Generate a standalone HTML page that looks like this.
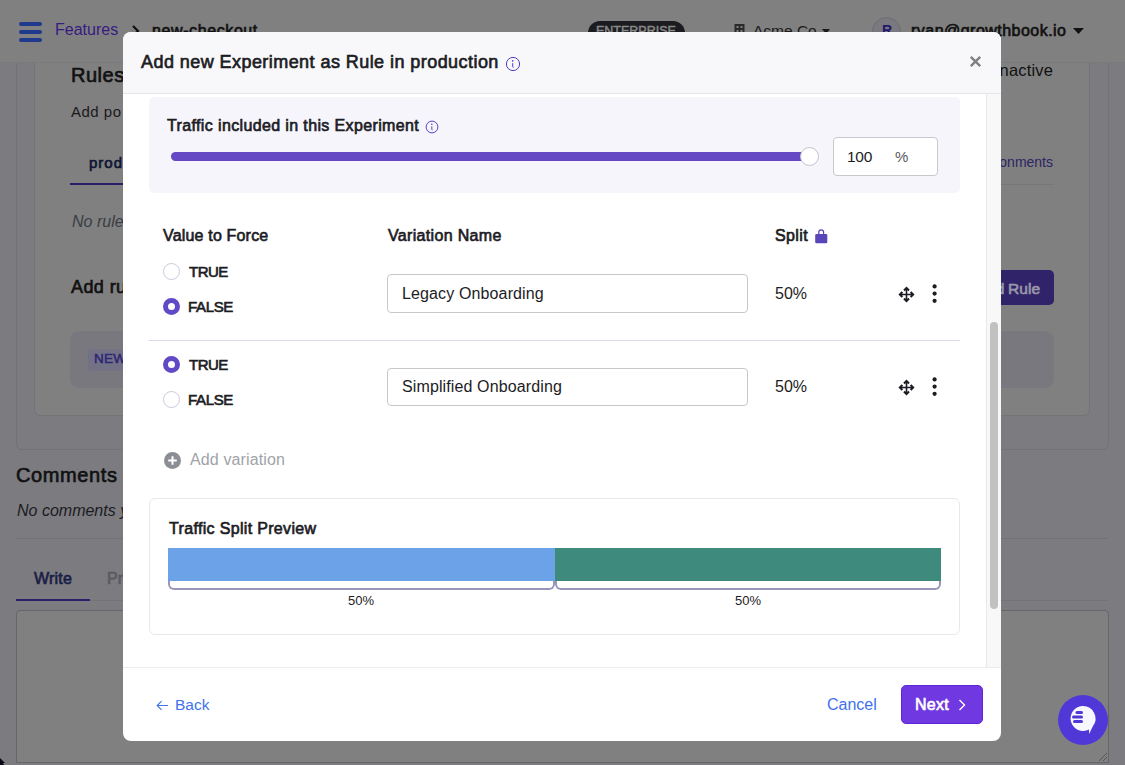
<!DOCTYPE html>
<html>
<head>
<meta charset="utf-8">
<style>
*{box-sizing:border-box;margin:0;padding:0}
html,body{width:1125px;height:765px;overflow:hidden}
body{background:#7b7b80;font-family:"Liberation Sans",sans-serif;position:relative;color:#1c1d22}
.a{position:absolute}
.t{position:absolute;white-space:nowrap;line-height:1}
.b{font-weight:700}
.sb{font-weight:400;-webkit-text-stroke-width:0.65px}
</style>
</head>
<body>
<!-- ============ BACKGROUND PAGE (pre-dimmed colours) ============ -->
<!-- outer card -->
<div class="a" style="left:16px;top:40px;width:1093px;height:410px;border:1px solid #727277;border-radius:6px;background:#7b7b80"></div>
<!-- inner card -->
<div class="a" style="left:34px;top:40px;width:1056px;height:376px;border:1px solid #747478;border-radius:6px;background:#808080"></div>
<div class="a" style="left:0;top:0;width:1125px;height:63px;background:#808080;border-bottom:1px solid #7a7a7c"></div>
<!-- hamburger -->
<div class="a" style="left:19px;top:22px;width:23px;height:4px;border-radius:2px;background:#1f3a8c"></div>
<div class="a" style="left:19px;top:30px;width:23px;height:4px;border-radius:2px;background:#1f3a8c"></div>
<div class="a" style="left:19px;top:38px;width:23px;height:4px;border-radius:2px;background:#1f3a8c"></div>
<div class="t" style="left:55px;top:22px;font-size:16px;color:#361b80">Features</div>
<svg class="a" style="left:131px;top:25px" width="10" height="12" viewBox="0 0 10 12"><path d="M2 1 L7 6 L2 11" stroke="#111" stroke-width="2.2" fill="none"/></svg>
<div class="t sb" style="left:152px;top:23px;font-size:16px;letter-spacing:0.6px;color:#111">new-checkout</div>
<div class="a" style="left:588px;top:21px;width:97px;height:24px;border-radius:12px;background:#1b1c20"></div>
<div class="t sb" style="left:596px;top:25px;font-size:12.5px;letter-spacing:0px;color:#888;-webkit-text-stroke-width:0.5px">ENTERPRISE</div>
<svg class="a" style="left:734px;top:24px" width="11" height="12" viewBox="0 0 11 12"><rect x="0.5" y="0" width="10" height="12" fill="#2a2a2c"/><rect x="2.5" y="2" width="2" height="2" fill="#808080"/><rect x="6.5" y="2" width="2" height="2" fill="#808080"/><rect x="2.5" y="6" width="2" height="2" fill="#808080"/><rect x="6.5" y="6" width="2" height="2" fill="#808080"/></svg>
<div class="t" style="left:753px;top:23px;font-size:15.5px;color:#1a1a1c">Acme Co</div>
<svg class="a" style="left:822px;top:29px" width="8" height="5" viewBox="0 0 8 5"><path d="M0 0 H8 L4 5Z" fill="#1a1a1c"/></svg>
<div class="a" style="left:872px;top:17px;width:29px;height:29px;border-radius:50%;background:#7a7980;border:1px solid #6c6c72"></div>
<div class="t b" style="left:882px;top:23px;font-size:14px;color:#22186a">R</div>
<div class="t sb" style="left:911px;top:23px;font-size:16px;color:#111;letter-spacing:0.47px">ryan@growthbook.io</div>
<svg class="a" style="left:1073px;top:28px" width="11" height="6" viewBox="0 0 11 6"><path d="M0 0 H11 L5.5 6Z" fill="#111"/></svg>

<div class="t sb" style="left:71px;top:65px;font-size:20px;letter-spacing:0.5px;color:#111">Rules</div>
<div class="t" style="left:71px;top:104px;font-size:15px;letter-spacing:0.5px;color:#1a1a1c">Add po</div>
<div class="t sb" style="left:89px;top:155px;font-size:15px;letter-spacing:1px;color:#0f1535">prod</div>
<div class="a" style="left:70px;top:183px;width:60px;height:2px;background:#2a1f68"></div>
<div class="t" style="left:953px;top:62px;font-size:16.5px;letter-spacing:0.2px;color:#111;text-align:right;width:100.2px">inactive</div>
<div class="t" style="left:903px;top:155px;font-size:14px;color:#2c2565;width:150px;text-align:right">Environments</div>
<div class="a" style="left:990px;top:184px;width:64px;height:1px;background:#77777a"></div>
<div class="t" style="left:72px;top:214px;font-size:16px;font-style:italic;color:#3a3d44">No rules for this environment yet</div>
<div class="t sb" style="left:71px;top:278px;font-size:18px;letter-spacing:0.4px;color:#111">Add rule to production</div>
<div class="a" style="left:970px;top:270px;width:84px;height:35px;border-radius:5px;background:#30236a"></div>
<div class="t sb" style="left:900px;top:281px;font-size:15.5px;letter-spacing:0px;word-spacing:-0.5px;color:#9a99a8;width:140px;text-align:right">Add Rule</div>
<div class="a" style="left:70px;top:331px;width:984px;height:57px;border-radius:9px;background:#79787e"></div>
<div class="a" style="left:88px;top:349px;width:60px;height:22px;border-radius:4px;background:#737186"></div>
<div class="t sb" style="left:94px;top:352px;font-size:13.5px;letter-spacing:0.3px;color:#2e2575;-webkit-text-stroke-width:0.5px">NEW</div>

<div class="t sb" style="left:16px;top:465px;font-size:20px;letter-spacing:0.6px;color:#111">Comments</div>
<div class="t" style="left:17px;top:503px;font-size:16px;font-style:italic;color:#1c1c1f">No comments yet</div>
<div class="a" style="left:16px;top:538px;width:1092px;height:1px;background:#727276"></div>
<div class="t sb" style="left:34px;top:571px;font-size:16px;letter-spacing:0.2px;color:#1a1d45">Write</div>
<div class="t sb" style="left:107px;top:571px;font-size:16px;letter-spacing:0.2px;color:#5a5a60">Preview</div>
<div class="a" style="left:16px;top:600px;width:1092px;height:1px;background:#747478"></div>
<div class="a" style="left:16px;top:599px;width:74px;height:2px;background:#2a1f68"></div>
<div class="a" style="left:16px;top:610px;width:1093px;height:153px;border:1px solid #666668;border-radius:4px 4px 0 0;background:#808080"></div>
<svg class="a" style="left:1098px;top:752px" width="10" height="10" viewBox="0 0 10 10"><path d="M1 9 L9 1 M5 9 L9 5" stroke="#555" stroke-width="1"/></svg>

<svg class="a" style="left:0;top:758px" width="8" height="7" viewBox="0 0 8 7"><path d="M0 0 L5 5 L3 5 L4 7 L0 7Z" fill="#0a0a14"/></svg>
<!-- chat bubble (not dimmed) -->
<div class="a" style="left:1058px;top:695px;width:50px;height:50px;border-radius:50%;background:#5038d8;z-index:5"></div>
<svg class="a" style="left:1058px;top:695px;z-index:6" width="50" height="50" viewBox="0 0 50 50">
<path d="M25 11 a12.5 12.5 0 1 0 6 23.5 L31 39 L35 31 A12.5 12.5 0 0 0 25 11Z" fill="#f7f7ff"/>
<rect x="17.5" y="16" width="7.5" height="3" rx="1.5" fill="#5038d8"/>
<rect x="14" y="20.5" width="11" height="3" rx="1.5" fill="#5038d8"/>
<rect x="15" y="25" width="10" height="3" rx="1.5" fill="#5038d8"/>
</svg>

<!-- ============ MODAL ============ -->
<div class="a" id="modal" style="left:123px;top:32px;width:878px;height:709px;background:#fff;border-radius:8px;overflow:hidden;z-index:10">
  <div class="a" style="left:0;top:0;width:878px;height:62px;background:#f8f8fa;border-bottom:1px solid #e4e4ea"></div>
  <div class="t sb" style="left:18px;top:21px;font-size:18px;letter-spacing:0.44px;color:#1c1c24">Add new Experiment as Rule in production</div>
  <svg class="a" style="left:382px;top:24px" width="16" height="16" viewBox="0 0 16 16"><circle cx="8" cy="8" r="6.6" stroke="#4e3cc0" stroke-width="1" fill="none"/><circle cx="7.7" cy="4.9" r="0.8" fill="#4e3cc0"/><path d="M7.7 7.2 V10.6 Q7.7 11.4 8.4 11.4" stroke="#4e3cc0" stroke-width="1" fill="none"/></svg>
  <svg class="a" style="left:846px;top:23px" width="13" height="13" viewBox="0 0 13 13"><path d="M1.8 1.8 L11.2 11.2 M11.2 1.8 L1.8 11.2" stroke="#808080" stroke-width="2.4"/></svg>

  <!-- body -->
  <div class="a" style="left:0;top:62px;width:878px;height:573px;background:#fff"></div>
  <!-- scrollbar -->
  <div class="a" style="left:863px;top:62px;width:15px;height:573px;background:#f8f8f8;border-left:1px solid #e8e8e8"></div>
  <div class="a" style="left:867px;top:290px;width:8px;height:287px;border-radius:4px;background:#c1c1c1"></div>

  <!-- traffic box -->
  <div class="a" style="left:26px;top:65px;width:811px;height:96px;border-radius:5px;background:#f6f5fb"></div>
  <div class="t sb" style="left:44px;top:86px;font-size:16px;letter-spacing:0.37px;color:#1c1c24">Traffic included in this Experiment</div>
  <svg class="a" style="left:302px;top:88px" width="14" height="14" viewBox="0 0 14 14"><circle cx="7" cy="7" r="5.9" stroke="#4e3cc0" stroke-width="0.95" fill="none"/><circle cx="6.8" cy="4.3" r="0.75" fill="#4e3cc0"/><path d="M6.8 6.3 V9.3 Q6.8 10 7.4 10" stroke="#4e3cc0" stroke-width="0.95" fill="none"/></svg>
  <div class="a" style="left:48px;top:120px;width:640px;height:9px;border-radius:5px;background:#6448c4"></div>
  <div class="a" style="left:677px;top:115px;width:19px;height:19px;border-radius:50%;background:#fff;border:1px solid #c4c4cc"></div>
  <div class="a" style="left:710px;top:105px;width:105px;height:39px;border-radius:4px;background:#fff;border:1px solid #c8c8cc"></div>
  <div class="t" style="left:724px;top:117px;font-size:15.5px;letter-spacing:-0.3px;color:#1c1c24">100</div>
  <div class="t" style="left:772px;top:117px;font-size:15px;color:#5a5a60">%</div>

  <!-- headers -->
  <div class="t sb" style="left:40px;top:196px;font-size:16px;letter-spacing:0.18px;color:#1c1c24">Value to Force</div>
  <div class="t sb" style="left:265px;top:196px;font-size:16px;letter-spacing:0.33px;color:#1c1c24">Variation Name</div>
  <div class="t sb" style="left:652px;top:196px;font-size:16px;letter-spacing:0.4px;color:#1c1c24">Split</div>
  <svg class="a" style="left:691px;top:197px" width="15" height="15" viewBox="0 0 15 15"><path d="M4.8 5.6 V3.2 A2.4 2.4 0 0 1 9.6 3.2 V5.6" stroke="#5846b8" stroke-width="1.25" fill="none"/><rect x="1.2" y="5.1" width="12.1" height="9.1" rx="1.3" fill="#5846b8"/></svg>

  <!-- row 1 -->
  <div class="a" style="left:40px;top:231px;width:17px;height:17px;border-radius:50%;border:1px solid #cdc8dc;background:#fff"></div>
  <div class="t sb" style="left:66px;top:232px;font-size:15px;letter-spacing:-0.5px;color:#1c1c24">TRUE</div>
  <div class="a" style="left:40px;top:266px;width:17px;height:17px;border-radius:50%;border:5px solid #6249c6;background:#fff"></div>
  <div class="t sb" style="left:65px;top:267px;font-size:15px;letter-spacing:-0.33px;color:#1c1c24">FALSE</div>
  <div class="a" style="left:264px;top:242px;width:361px;height:39px;border-radius:4px;border:1px solid #c8c8cc;background:#fff"></div>
  <div class="t" style="left:279px;top:254px;font-size:16px;letter-spacing:0.13px;color:#1c1c24">Legacy Onboarding</div>
  <div class="t" style="left:652px;top:254px;font-size:16px;color:#1c1c24">50%</div>
  <svg class="a" style="left:775px;top:254px" width="17" height="17" viewBox="0 0 17 17" id="mv1"><path d="M8.5 2.5 V14.5 M2.5 8.5 H14.5" stroke="#1c1c24" stroke-width="1.6"/><path d="M6 4.4 L8.5 1.9 L11 4.4 M6 12.6 L8.5 15.1 L11 12.6 M4.4 6 L1.9 8.5 L4.4 11 M12.6 6 L15.1 8.5 L12.6 11" stroke="#1c1c24" stroke-width="2.1" fill="none"/></svg>
  <svg class="a" style="left:807px;top:251px" width="10" height="22" viewBox="0 0 10 22"><circle cx="4.6" cy="3.4" r="2.1" fill="#1c1c24"/><circle cx="4.6" cy="10.6" r="2.1" fill="#1c1c24"/><circle cx="4.6" cy="17.8" r="2.1" fill="#1c1c24"/></svg>

  <div class="a" style="left:26px;top:308px;width:811px;height:1px;background:#dcdbe8"></div>

  <!-- row 2 -->
  <div class="a" style="left:40px;top:324px;width:17px;height:17px;border-radius:50%;border:5px solid #6249c6;background:#fff"></div>
  <div class="t sb" style="left:66px;top:325px;font-size:15px;letter-spacing:-0.5px;color:#1c1c24">TRUE</div>
  <div class="a" style="left:40px;top:359px;width:17px;height:17px;border-radius:50%;border:1px solid #cdc8dc;background:#fff"></div>
  <div class="t sb" style="left:65px;top:360px;font-size:15px;letter-spacing:-0.33px;color:#1c1c24">FALSE</div>
  <div class="a" style="left:264px;top:336px;width:361px;height:38px;border-radius:4px;border:1px solid #c8c8cc;background:#fff"></div>
  <div class="t" style="left:279px;top:347px;font-size:16px;letter-spacing:0.12px;color:#1c1c24">Simplified Onboarding</div>
  <div class="t" style="left:652px;top:347px;font-size:16px;color:#1c1c24">50%</div>
  <svg class="a" style="left:775px;top:347px" width="17" height="17" viewBox="0 0 17 17"><path d="M8.5 2.5 V14.5 M2.5 8.5 H14.5" stroke="#1c1c24" stroke-width="1.6"/><path d="M6 4.4 L8.5 1.9 L11 4.4 M6 12.6 L8.5 15.1 L11 12.6 M4.4 6 L1.9 8.5 L4.4 11 M12.6 6 L15.1 8.5 L12.6 11" stroke="#1c1c24" stroke-width="2.1" fill="none"/></svg>
  <svg class="a" style="left:807px;top:344px" width="10" height="22" viewBox="0 0 10 22"><circle cx="4.6" cy="3.4" r="2.1" fill="#1c1c24"/><circle cx="4.6" cy="10.6" r="2.1" fill="#1c1c24"/><circle cx="4.6" cy="17.8" r="2.1" fill="#1c1c24"/></svg>

  <!-- add variation -->
  <svg class="a" style="left:41px;top:420px" width="17" height="17" viewBox="0 0 17 17"><circle cx="8.5" cy="8.5" r="8.5" fill="#8b8e94"/><path d="M8.5 4.2 V12.8 M4.2 8.5 H12.8" stroke="#fff" stroke-width="2"/></svg>
  <div class="t" style="left:67px;top:420px;font-size:16px;letter-spacing:0.12px;color:#a0a3a8">Add variation</div>

  <!-- preview -->
  <div class="a" style="left:26px;top:466px;width:811px;height:137px;border-radius:6px;border:1px solid #e8e8ec;background:#fff"></div>
  <div class="t sb" style="left:46px;top:489px;font-size:16px;letter-spacing:0.33px;color:#1c1c24">Traffic Split Preview</div>
  <div class="a" style="left:45px;top:516px;width:387px;height:33px;background:#6ca2e8"></div>
  <div class="a" style="left:432px;top:516px;width:386px;height:33px;background:#3e8a7d"></div>
  <div class="a" style="left:45px;top:549px;width:387px;height:9px;border:2px solid #9896bb;border-top:none;border-radius:0 0 6px 6px"></div>
  <div class="a" style="left:432px;top:549px;width:386px;height:9px;border:2px solid #9896bb;border-top:none;border-radius:0 0 6px 6px"></div>
  <div class="t" style="left:225px;top:562px;font-size:13px;color:#1c1c24">50%</div>
  <div class="t" style="left:612px;top:562px;font-size:13px;color:#1c1c24">50%</div>

  <!-- footer -->
  <div class="a" style="left:0;top:635px;width:878px;height:1px;background:#ececf0"></div>
  <svg class="a" style="left:33px;top:668px" width="13" height="11" viewBox="0 0 13 11"><path d="M12 5.5 H1.5 M5.5 1.2 L1.2 5.5 L5.5 9.8" stroke="#3f72ec" stroke-width="1.1" fill="none"/></svg>
  <div class="t" style="left:52px;top:665px;font-size:15.5px;color:#3f72ec">Back</div>
  <div class="t" style="left:704px;top:665px;font-size:16px;color:#3f72ec">Cancel</div>
  <div class="a" style="left:778px;top:653px;width:82px;height:39px;border-radius:5px;background:#7038e0;border:1px solid #5f26d8"></div>
  <div class="t sb" style="left:792px;top:665px;font-size:16px;letter-spacing:0.3px;color:#fff">Next</div>
  <svg class="a" style="left:835px;top:667px" width="8" height="12" viewBox="0 0 8 12"><path d="M1.5 1 L6.5 6 L1.5 11" stroke="#fff" stroke-width="1.4" fill="none"/></svg>
</div>
</body>
</html>
